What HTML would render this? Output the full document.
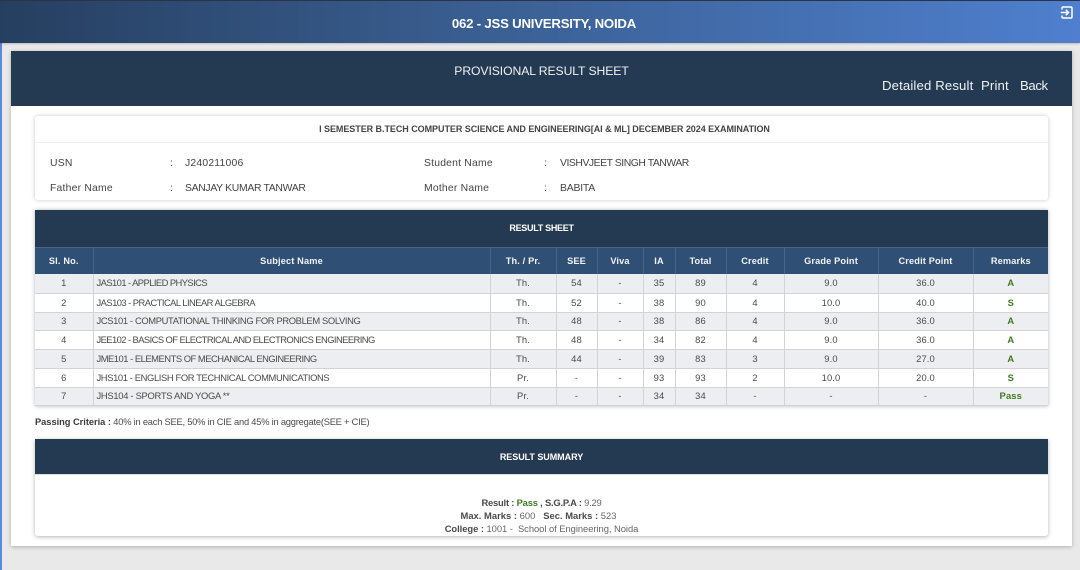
<!DOCTYPE html>
<html lang="en">
<head>
<meta charset="utf-8">
<title>Provisional Result Sheet</title>
<style>
*{box-sizing:border-box}
html,body{margin:0;padding:0}
body{width:1080px;height:570px;overflow:hidden;position:relative;background:#e9e9e9;font-family:"Liberation Sans",sans-serif;color:#444;filter:blur(.3px)}
.a{position:absolute;white-space:nowrap}
#stripe{left:0;top:40px;width:2px;height:530px;background:#5a8ade}
#top{left:0;top:0;width:1080px;height:43px;background:linear-gradient(90deg,#263f60 0%,#3a5f92 45%,#4f7fce 100%);border-top:1px solid #2a3442;box-shadow:0 1px 2px rgba(0,0,0,.2)}
#uni{left:0;top:15px;width:1088px;text-align:center;font-weight:700;font-size:13.2px;line-height:17px;color:#fff;letter-spacing:-.21px}
#panel{left:11px;top:51px;width:1061px;height:495px;background:#fff;box-shadow:0 1px 4px rgba(0,0,0,.25)}
#phead{left:11px;top:51px;width:1061px;height:55px;background:#243a52}
#ptitle{left:11px;top:63px;width:1061px;text-align:center;color:#eef1f4;font-size:12.2px;line-height:16px;letter-spacing:-.09px}
.lnk{top:78px;color:#eef1f4;font-size:13.2px;line-height:16px;letter-spacing:.13px}
#card{left:35px;top:116px;width:1013px;height:84px;background:#fff;border-radius:3px;box-shadow:0 0 4px rgba(0,0,0,.22)}
#ctitle{left:35px;top:116px;width:1013px;height:27px;padding-left:6px;border-bottom:1px solid #eee;text-align:center;font-weight:700;font-size:9px;line-height:26px;color:#444;letter-spacing:-.05px}
.f{font-size:10.4px;line-height:14px;color:#444;letter-spacing:.2px}
#tb{left:35px;top:210px;width:1013px;border-collapse:collapse;table-layout:fixed;box-shadow:0 0 4px rgba(0,0,0,.3);background:#fff}
#tb th.t{height:37px;background:#243a52;color:#fff;font-size:9px;letter-spacing:-.3px;border:0}
#tb tr.h th{height:27px;background:#2f4f74;color:#f1f3f6;font-size:9.2px;letter-spacing:.16px;border-left:1px solid #48668a;border-top:1px solid #48668a;padding:0}
#tb tr.h th:first-child{border-left:0}
#tb td{height:19px;padding:0;text-align:center;font-size:9.4px;line-height:12px;color:#4a4a4a;letter-spacing:.14px;border:1px solid #d3d3d3;border-width:0 0 1px 1px;overflow:hidden;white-space:nowrap}
#tb tr.n td{height:18px}
#tb td:first-child{border-left:0}
#tb td.s{text-align:left;padding-left:3px}
#tb tr.z td{background:#eceef1}
#tb td.g{color:#3f7a22;font-weight:700}
#crit{left:35px;top:416px;font-size:9.3px;line-height:12px;color:#4a4a4a;letter-spacing:-.21px}
#crit b{color:#3a3a3a;letter-spacing:-.03px}
#sum{left:35px;top:439px;width:1013px;height:97px;background:#fff;border-radius:0 0 3px 3px;box-shadow:0 1px 4px rgba(0,0,0,.3)}
#shead{left:35px;top:439px;width:1013px;height:36px;background:#243a52;color:#fff;text-align:center;font-weight:700;font-size:9px;line-height:36px;letter-spacing:-.05px;border-bottom:1px solid #dcdcdc}
.r{left:35px;width:1013px;text-align:center;font-size:9.4px;line-height:12px;color:#666}
.r b{color:#4a4a4a}
.r b.p{color:#3f7a22}
</style>
</head>
<body>
<div class="a" id="stripe"></div>
<div class="a" id="top"></div>
<div class="a" id="uni">062 - JSS UNIVERSITY, NOIDA</div>
<svg class="a" style="left:1060px;top:6px" width="13" height="13" viewBox="0 0 13 13" fill="none" stroke="#fff" stroke-width="1.5">
<path d="M2 3.5V2.2Q2 1 3.2 1H10.8Q12 1 12 2.2V10.8Q12 12 10.8 12H3.2Q2 12 2 10.8V9.5"/>
<path d="M.8 6.5H8.2M5.8 3.8L8.6 6.5L5.8 9.2"/>
</svg>

<div class="a" id="panel"></div>
<div class="a" id="phead"></div>
<div class="a" id="ptitle">PROVISIONAL RESULT SHEET</div>
<div class="a lnk" style="left:882px">Detailed Result</div>
<div class="a lnk" style="left:981px">Print</div>
<div class="a lnk" style="left:1020px;letter-spacing:-.4px">Back</div>

<div class="a" id="card"></div>
<div class="a" id="ctitle">I SEMESTER B.TECH COMPUTER SCIENCE AND ENGINEERING[AI &amp; ML] DECEMBER 2024 EXAMINATION</div>
<div class="a f" style="left:50px;top:157px">USN</div>
<div class="a f" style="left:170px;top:157px">:</div>
<div class="a f" style="left:185px;top:157px">J240211006</div>
<div class="a f" style="left:424px;top:157px">Student Name</div>
<div class="a f" style="left:544px;top:157px">:</div>
<div class="a f" style="left:560px;top:157px;letter-spacing:-.45px">VISHVJEET SINGH TANWAR</div>
<div class="a f" style="left:50px;top:182px">Father Name</div>
<div class="a f" style="left:170px;top:182px">:</div>
<div class="a f" style="left:185px;top:182px;letter-spacing:-.31px">SANJAY KUMAR TANWAR</div>
<div class="a f" style="left:424px;top:182px">Mother Name</div>
<div class="a f" style="left:544px;top:182px">:</div>
<div class="a f" style="left:560px;top:182px;letter-spacing:-.2px">BABITA</div>

<table class="a" id="tb">
<colgroup>
<col style="width:58px"><col style="width:397px"><col style="width:66px"><col style="width:41px"><col style="width:46px"><col style="width:32px"><col style="width:51px"><col style="width:58px"><col style="width:94px"><col style="width:95px"><col style="width:75px">
</colgroup>
<tr><th class="t" colspan="11">RESULT SHEET</th></tr>
<tr class="h"><th>Sl. No.</th><th>Subject Name</th><th>Th. / Pr.</th><th>SEE</th><th>Viva</th><th>IA</th><th>Total</th><th>Credit</th><th>Grade Point</th><th>Credit Point</th><th>Remarks</th></tr>
<tr class="z"><td>1</td><td class="s" style="letter-spacing:-.56px">JAS101 - APPLIED PHYSICS</td><td>Th.</td><td>54</td><td>-</td><td>35</td><td>89</td><td>4</td><td>9.0</td><td>36.0</td><td class="g">A</td></tr>
<tr><td>2</td><td class="s" style="letter-spacing:-.54px">JAS103 - PRACTICAL LINEAR ALGEBRA</td><td>Th.</td><td>52</td><td>-</td><td>38</td><td>90</td><td>4</td><td>10.0</td><td>40.0</td><td class="g">S</td></tr>
<tr class="z n"><td>3</td><td class="s" style="letter-spacing:-.36px">JCS101 - COMPUTATIONAL THINKING FOR PROBLEM SOLVING</td><td>Th.</td><td>48</td><td>-</td><td>38</td><td>86</td><td>4</td><td>9.0</td><td>36.0</td><td class="g">A</td></tr>
<tr><td>4</td><td class="s" style="letter-spacing:-.57px">JEE102 - BASICS OF ELECTRICAL AND ELECTRONICS ENGINEERING</td><td>Th.</td><td>48</td><td>-</td><td>34</td><td>82</td><td>4</td><td>9.0</td><td>36.0</td><td class="g">A</td></tr>
<tr class="z"><td>5</td><td class="s" style="letter-spacing:-.48px">JME101 - ELEMENTS OF MECHANICAL ENGINEERING</td><td>Th.</td><td>44</td><td>-</td><td>39</td><td>83</td><td>3</td><td>9.0</td><td>27.0</td><td class="g">A</td></tr>
<tr><td>6</td><td class="s" style="letter-spacing:-.38px">JHS101 - ENGLISH FOR TECHNICAL COMMUNICATIONS</td><td>Pr.</td><td>-</td><td>-</td><td>93</td><td>93</td><td>2</td><td>10.0</td><td>20.0</td><td class="g">S</td></tr>
<tr class="z n"><td>7</td><td class="s" style="letter-spacing:-.29px">JHS104 - SPORTS AND YOGA **</td><td>Pr.</td><td>-</td><td>-</td><td>34</td><td>34</td><td>-</td><td>-</td><td>-</td><td class="g">Pass</td></tr>
</table>

<div class="a" id="crit"><b>Passing Criteria :</b> 40% in each SEE, 50% in CIE and 45% in aggregate(SEE + CIE)</div>

<div class="a" id="sum"></div>
<div class="a" id="shead">RESULT SUMMARY</div>
<div class="a r" style="top:497px;letter-spacing:-.2px"><b>Result :</b> <b class="p">Pass</b> <b>, S.G.P.A :</b> 9.29</div>
<div class="a r" style="top:510px;left:32px;letter-spacing:.02px"><b>Max. Marks :</b> 600 &nbsp; <b>Sec. Marks :</b> 523</div>
<div class="a r" style="top:523px;letter-spacing:-.04px"><b>College :</b> 1001 - &nbsp;School of Engineering, Noida</div>
</body>
</html>
